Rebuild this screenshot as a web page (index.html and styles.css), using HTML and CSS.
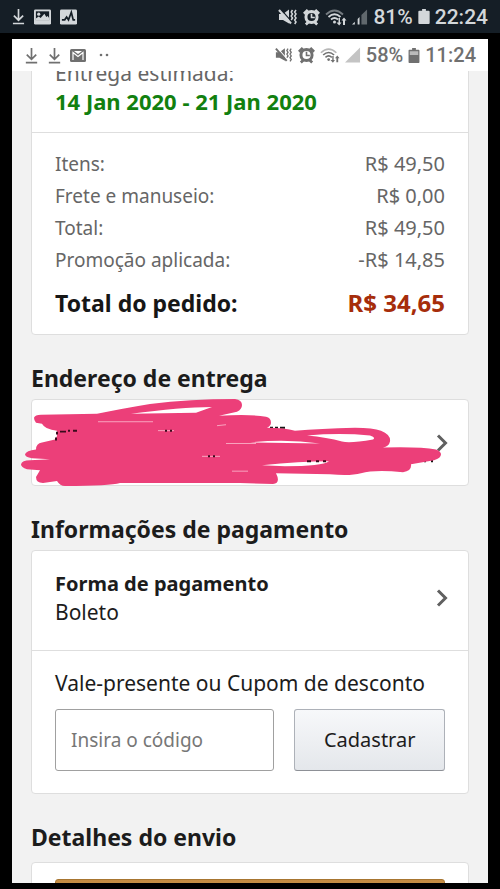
FILE: index.html
```html
<!DOCTYPE html>
<html lang="pt-BR">
<head>
<meta charset="utf-8">
<meta name="viewport" content="width=device-width, initial-scale=1">
<title>Pedido</title>
<link rel="stylesheet" href="styles.css">
</head>
<body>
<svg class="defs" aria-hidden="true">
  <symbol id="download" viewBox="0 0 14 18"><path d="M7 1v12M2 8l5 5 5-5M1 16.500h12" fill="none" stroke="currentColor" stroke-width="1.800"/></symbol>
  <symbol id="mute" viewBox="0 0 20 18"><path d="M1 6h4l6-4.500v14L5 12H1z" fill="currentColor"/><path d="M2.500 1l10.500 12" stroke="var(--bar)" stroke-width="1.200"/><path d="M1 2l12 13.500" stroke="currentColor" stroke-width="2.200"/><path d="M14.500 2l-1.300 2 1.300 2-1.300 2 1.300 2-1.300 2M18 2l-1.300 2 1.300 2-1.300 2 1.300 2-1.300 2 1.300 2-1.300 2" fill="none" stroke="currentColor" stroke-width="1.500"/></symbol>
  <symbol id="alarm" viewBox="0 0 18 18"><circle cx="9" cy="9" r="7.500" fill="currentColor"/><path d="M1 5.500L5 1.500M17 5.500l-4-4M3 17l2.500-2.500M15 17l-2.500-2.500" stroke="currentColor" stroke-width="2.800"/><circle cx="9" cy="9" r="4.300" fill="var(--bar)"/><path d="M9 5.500V9.500h3.500" fill="none" stroke="currentColor" stroke-width="1.700"/></symbol>
  <symbol id="wifi" viewBox="0 0 22 18"><g fill="none" stroke="currentColor" stroke-width="1.800"><path d="M1 6.500Q9.500-1.500 18 6.500" opacity=".5"/><path d="M3.500 9Q9.500 3.500 15.500 9M6 11.500q3.500-3 7 0"/></g><circle cx="9.500" cy="14" r="1.500" fill="currentColor"/><path d="M13.500 10v4.500h-2l2.700 3 2.300-3h-1.500V10zM18 17v-4.500h-1.500l2.500-3 2.500 3H20V17z" fill="currentColor"/></symbol>
  <symbol id="battery" viewBox="0 0 12 18"><path d="M4 1h4v2h3q1 0 1 1v12q0 1-1 1H1q-1 0-1-1V4q0-1 1-1h3z" fill="currentColor"/></symbol>
</svg>

<header class="statusbar device">
  <div class="notes">
    <svg class="arrow"><use href="#download"/></svg>
    <svg class="tile" viewBox="0 0 18 16"><rect width="18" height="16" rx="1.500" fill="currentColor"/><rect x="2" y="2" width="14" height="9.500" fill="var(--bar)"/><circle cx="5" cy="5" r="1.700" fill="currentColor"/><path d="M2 12V9.500l3-2 2 1.500 4-4.500 2 3.500 1.500-1 1.500 2V12z" fill="currentColor"/></svg>
    <svg class="tile" viewBox="0 0 18 16"><rect width="18" height="16" rx="1.500" fill="currentColor"/><path d="M2 11h3l2-3 2 3 3-8 2 8h2" fill="none" stroke="var(--bar)" stroke-width="1.800"/></svg>
  </div>
  <div class="system">
    <svg class="mute"><use href="#mute"/></svg>
    <svg class="alarm"><use href="#alarm"/></svg>
    <svg class="wifi"><use href="#wifi"/></svg>
    <svg class="signal" viewBox="0 0 17 18"><path d="M0 17l3-3v3zM6 17V11l2-2v8z" fill="currentColor"/><path d="M10 17V7l6-6v16z" fill="currentColor" opacity=".4"/></svg>
    <span class="level">81%</span>
    <svg class="battery"><use href="#battery"/></svg>
    <time>22:24</time>
  </div>
</header>

<main class="screen">
  <header class="statusbar inner">
    <div class="notes">
      <svg class="arrow"><use href="#download"/></svg>
      <svg class="arrow"><use href="#download"/></svg>
      <svg class="mail" viewBox="0 0 16 13"><rect width="16" height="13" rx="1.500" fill="currentColor"/><path d="M3 11V3.500l5 4 5-4V11" fill="none" stroke="var(--bar)" stroke-width="1.200"/><path d="M4 2h8L8 5z" fill="var(--bar)"/></svg>
      <svg class="dots" viewBox="0 0 12 4"><circle cx="3" cy="2" r="1.300" fill="currentColor"/><circle cx="9" cy="2" r="1.300" fill="currentColor"/></svg>
    </div>
    <div class="system">
      <svg class="mute"><use href="#mute"/></svg>
      <svg class="alarm"><use href="#alarm"/></svg>
      <svg class="wifi"><use href="#wifi"/></svg>
      <svg class="signal" viewBox="0 0 17 18"><path d="M0 17L16 1v16z" fill="#c4c4c4"/></svg>
      <span class="level">58%</span>
      <svg class="battery" viewBox="0 0 12 18"><use href="#battery"/><path d="M1.500 4.500h9v4h-9z" fill="#bbb"/></svg>
      <time>11:24</time>
    </div>
  </header>

  <div class="content">
    <section class="card summary">
      <div class="delivery">
        <div class="muted">Entrega estimada:</div>
        <strong>14 Jan 2020 - 21 Jan 2020</strong>
      </div>
      <table class="costs">
        <tbody>
          <tr><th scope="row">Itens:</th><td>R$ 49,50</td></tr>
          <tr><th scope="row">Frete e manuseio:</th><td>R$ 0,00</td></tr>
          <tr><th scope="row">Total:</th><td>R$ 49,50</td></tr>
          <tr><th scope="row">Promoção aplicada:</th><td>-R$ 14,85</td></tr>
        </tbody>
        <tfoot>
          <tr><th scope="row">Total do pedido:</th><td>R$ 34,65</td></tr>
        </tfoot>
      </table>
    </section>

    <h2>Endereço de entrega</h2>
    <section class="card">
      <a class="row address" href="#endereco" aria-label="Endereço de entrega">
        <svg class="chevron" viewBox="0 0 12 18"><path d="M2 1.500L9.500 9 2 16.500"/></svg>
        <svg class="scribble" viewBox="31 399 438 88" preserveAspectRatio="none" aria-hidden="true">
          <path d="M270 428h3M275 428h3M280 428h5M424 462h2M432 459v4" fill="none" stroke="#161616" stroke-width="2"/>
          <path fill="#ec3f79" fill-rule="evenodd" d="M34 418Q35 415 41 415L97 414Q120 409 150 404Q190 399 235 399Q242 400 242 405Q242 409 237 412L219 416Q250 414 266 417Q271 418 271 423Q271 426 267 428Q285 428 295 431Q320 429 355 428Q373 428 381 431Q391 435 390 442Q389 447 383 448Q420 447 436 450Q441 452 441 455Q441 459 434 461L411 465Q412 472 403 473Q375 470 361 474Q350 477 330 475L276 474Q281 484 273 485L240 484L120 484Q110 487 65 487Q60 487 57 482L43 484Q36 484 36 478L40 471L27 470Q21 468 21 465Q22 461 30 461L50 460L32 459Q25 458 25 455Q26 451 36 450Q36 444 42 443L55 440Q58 437 57 431Q45 430 42 424L36 423Q34 421 34 418ZM131 414Q180 407 212 407L196 413ZM307 436Q340 433 370 436Q376 438 373 440Q350 444 342 442Q327 438 307 436ZM250 443Q285 439 320 444ZM262 466Q300 462 329 462Q322 467 285 467Z"/>
          <path d="M98 422h55M217 426l9-1M226 444h30M158 431h16M202 457h18M232 472h16" fill="none" stroke="#f8a4c0" stroke-width="1"/>
          <path d="M56 441v-3M57 435v-3M60 432h6M68 431h2M73 431h4M165 431h2M170 431h2M208 457h2M213 457h2M307 462h4M316 462h3M323 462h3" fill="none" stroke="#3a0a1c" stroke-width="2"/>
        </svg>
      </a>
    </section>

    <h2>Informações de pagamento</h2>
    <section class="card">
      <a class="row payment" href="#pagamento">
        <span><strong>Forma de pagamento</strong><br>Boleto</span>
        <svg class="chevron" viewBox="0 0 12 18"><path d="M2 1.500L9.500 9 2 16.500"/></svg>
      </a>
      <form class="coupon">
        <label for="codigo">Vale-presente ou Cupom de desconto</label>
        <div class="fields">
          <input id="codigo" type="text" placeholder="Insira o código">
          <button type="button">Cadastrar</button>
        </div>
      </form>
    </section>

    <h2>Detalhes do envio</h2>
    <section class="card shipping">
      <button class="primary" type="button" aria-label="Confirmar pedido"></button>
    </section>
  </div>
</main>
</body>
</html>
```
FILE: styles.css
```css
* { box-sizing: border-box; }

body {
  margin: 0;
  height: 100vh;
  display: flex;
  flex-direction: column;
  gap: 6px;
  padding-bottom: 6px;
  overflow: hidden;
  background: #000;
  color: #1c1c1c;
  font: 21px/28px "Noto Sans", sans-serif;
}

.defs { display: none; }

.statusbar {
  flex: none;
  display: flex;
  justify-content: space-between;
  align-items: center;
  font-family: Roboto, sans-serif;
  color: var(--ink);
  background: var(--bar);
}
.device { --bar: #151e26; --ink: #d3d7da; height: 33px; padding: 0 12px; font-size: 21px; }
.inner { --bar: #fff; --ink: #707070; height: 32px; padding: 0 12px; font-size: 20px; }

.notes, .system { display: flex; align-items: center; }
.notes { gap: 8px; }
.device .notes { gap: 9px; }
.system { gap: 5px; }
.level, time { font-weight: 500; }
.arrow { width: 13px; height: 17px; }
.inner .arrow { width: 15px; }
.tile { width: 17px; height: 16px; }
.mail { width: 16px; height: 13px; }
.dots { width: 12px; height: 4px; margin-left: 4px; }
.mute { width: 20px; height: 18px; }
.alarm { width: 17px; height: 18px; }
.wifi { width: 22px; height: 18px; }
.signal { width: 16px; height: 18px; }
.battery { width: 12px; height: 17px; }
.inner .mute { width: 18px; }
.inner .wifi { width: 20px; }

.screen {
  flex: 1;
  min-height: 0;
  margin: 0 12px;
  display: flex;
  flex-direction: column;
  background: #f2f2f2;
}
.content {
  flex: 1;
  min-height: 0;
  overflow: hidden;
  padding: 0 19px;
}

.card {
  background: #fff;
  border: 1px solid #dedede;
  border-radius: 4px;
}
.summary { margin-top: -24px; }

.delivery { padding: 11px 23px 17px; border-bottom: 1px solid #dedede; }
.delivery strong { display: block; color: #12800f; font-size: 22px; }
.muted { color: #666; }

.costs { width: 100%; border-collapse: collapse; margin: 15px 0; color: #666; }
.costs th, .costs td { padding: 0 23px; line-height: 32px; font-weight: 400; text-align: left; }
.costs th { font-size: 19px; }
.costs td { font-size: 20px; text-align: right; }
.costs tfoot th, .costs tfoot td { padding-top: 11px; font-weight: 700; }
.costs tfoot th { color: #161616; font-size: 23px; }
.costs tfoot td { color: #a62d0b; font-size: 24px; }

h2 { margin: 27px 0 5px; font-size: 23px; line-height: 32px; }

.row {
  position: relative;
  display: flex;
  justify-content: space-between;
  align-items: center;
  padding: 18px 20px 24px 23px;
  color: inherit;
  text-decoration: none;
}
.row strong { font-size: 20px; }
.address { height: 85px; padding: 0 20px; justify-content: flex-end; }
.payment { border-bottom: 1px solid #dedede; }
.chevron { width: 12px; height: 18px; fill: none; stroke: #606060; stroke-width: 3; }
.scribble {
  position: absolute;
  inset: -1px;
  width: calc(100% + 2px);
  height: calc(100% + 2px);
  overflow: visible;
}

.coupon { padding: 18px 23px 22px; }
.coupon label { display: block; margin-bottom: 12px; }
.fields { display: grid; grid-template-columns: 220fr 151fr; gap: 20px; }
input, button { font: inherit; color: inherit; height: 62px; min-width: 0; border-radius: 3px; }
input { padding: 0 15px; border: 1px solid #a0a0a0; background: #fff; font-size: 19px; }
input::placeholder { color: #777; opacity: 1; }
button { padding: 0; border: 1px solid #adb1b8; border-bottom-color: #8d9096; background: linear-gradient(#f7f8fa, #e4e7eb); font-size: 20px; }

.shipping { margin-top: 9px; padding: 16px 23px; }
.primary { display: block; width: 100%; border-color: #a77530; background: linear-gradient(#c58d45, #f0c14b); }
```
